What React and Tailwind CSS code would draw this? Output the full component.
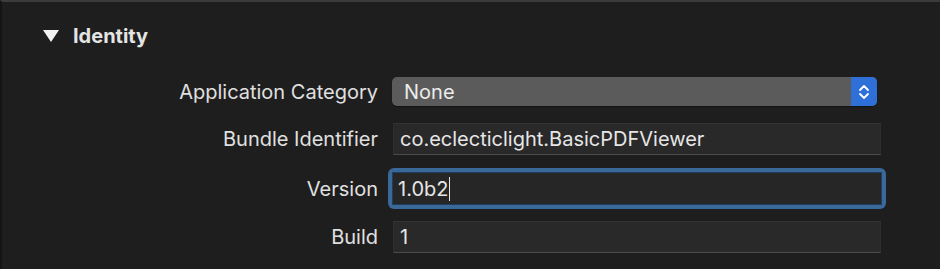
import React from "react";

const font = { fontFamily: "Inter, 'Liberation Sans', sans-serif" };

function Label({ children }) {
  return (
    <div className="w-[378px] shrink-0 text-right pr-[2px] text-[20px] text-[#e0e0e0] leading-none">
      {children}
    </div>
  );
}

function Field({ value, focused }) {
  if (focused) {
    return (
      <div className="ml-[8px] w-[498px] h-[41px] rounded-[6px] bg-[#3a6898] p-[4px]">
        <div className="h-full w-full bg-[#262626] border border-[#1f3f60] flex items-center px-[5px] text-[20px] text-[#e6e6e6]">
          <span>{value}</span>
          <span className="inline-block w-[1px] h-[24px] bg-[#e6e6e6] ml-[1px]" />
        </div>
      </div>
    );
  }
  return (
    <div className="ml-[13px] w-[488px] h-[32px] bg-[#292929] border-t border-t-[#333333] border-x border-x-[#2e2e2e] border-b border-b-[#4a4a4a] flex items-center px-[6px] text-[20px] text-[#e6e6e6]">
      {value}
    </div>
  );
}

export default function App() {
  return (
    <div
      className="w-[940px] h-[269px] bg-[#1e1e1e] border-t-2 border-t-[#3b3b3b] border-l-2 border-l-[#141414] overflow-hidden"
      style={font}
    >
      <div className="flex items-center pl-[41px] pt-[23px] h-[44px]">
        <svg width="16" height="14" viewBox="0 0 16 14" className="shrink-0">
          <polygon points="0,1 16,1 8,13" fill="#f2f2f2" />
        </svg>
        <span className="ml-[14px] text-[20px] font-bold text-[#e4e4e4]">Identity</span>
      </div>

      <div className="flex flex-col mt-[31px]">
        <div className="flex items-center h-[29px]">
          <Label>Application Category</Label>
          <div className="ml-[12px] w-[485px] h-[29px] rounded-[5px] bg-[#5b5b5b] flex items-center justify-between shadow-[0_1px_1px_rgba(0,0,0,0.4)]">
            <span className="pl-[12px] text-[20px] text-[#ececec]">None</span>
            <div className="w-[26px] h-full rounded-r-[5px] bg-[#2f6fd8] flex items-center justify-center">
              <svg width="12" height="18" viewBox="0 0 12 18">
                <polyline points="2,7 6,3 10,7" fill="none" stroke="#ffffff" strokeWidth="1.8" strokeLinecap="round" strokeLinejoin="round" />
                <polyline points="2,11 6,15 10,11" fill="none" stroke="#ffffff" strokeWidth="1.8" strokeLinecap="round" strokeLinejoin="round" />
              </svg>
            </div>
          </div>
        </div>

        <div className="flex items-center mt-[17px]">
          <Label>Bundle Identifier</Label>
          <Field value="co.eclecticlight.BasicPDFViewer" />
        </div>

        <div className="flex items-center mt-[13px]">
          <Label>Version</Label>
          <Field value="1.0b2" focused />
        </div>

        <div className="flex items-center mt-[12px]">
          <Label>Build</Label>
          <Field value="1" />
        </div>
      </div>
    </div>
  );
}
